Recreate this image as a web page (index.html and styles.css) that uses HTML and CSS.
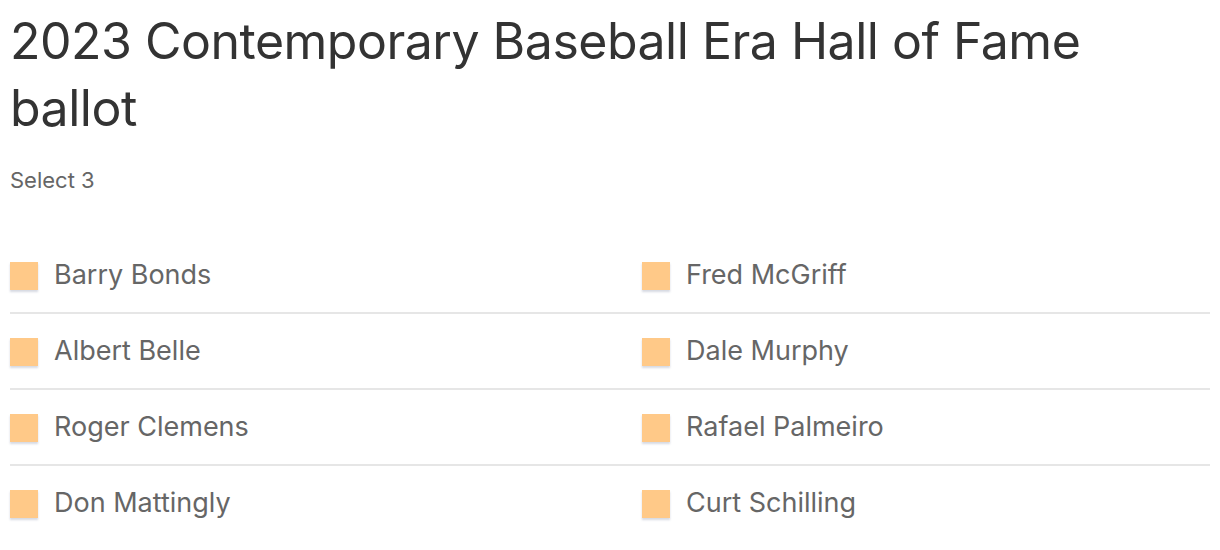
FILE: index.html
```html
<!DOCTYPE html>
<html>
<head>
<meta charset="utf-8">
<link rel="stylesheet" href="styles.css">
</head>
<body>
<div class="page">
  <h1 class="title">2023 Contemporary Baseball Era Hall of Fame ballot</h1>
  <div class="sub">Select 3</div>
  <div class="list">
    <div class="row">
      <div class="item"><span class="box"></span><span class="name">Barry Bonds</span></div>
      <div class="item"><span class="box"></span><span class="name">Fred McGriff</span></div>
    </div>
    <div class="row">
      <div class="item"><span class="box"></span><span class="name">Albert Belle</span></div>
      <div class="item"><span class="box"></span><span class="name">Dale Murphy</span></div>
    </div>
    <div class="row">
      <div class="item"><span class="box"></span><span class="name">Roger Clemens</span></div>
      <div class="item"><span class="box"></span><span class="name">Rafael Palmeiro</span></div>
    </div>
    <div class="row last">
      <div class="item"><span class="box"></span><span class="name">Don Mattingly</span></div>
      <div class="item"><span class="box"></span><span class="name">Curt Schilling</span></div>
    </div>
  </div>
</div>
</body>
</html>
```
FILE: styles.css
```css
html, body { margin: 0; padding: 0; background: #fff; }
.page {
  padding: 8px 10px 0 10px;
  font-family: Inter, "Noto Sans", sans-serif;
}
.title {
  margin: 0;
  font-size: 50px;
  line-height: 67px;
  font-weight: 400;
  color: #333;
  letter-spacing: -0.5px;
  width: 1100px;
}
.sub {
  margin-top: 25px;
  font-size: 22px;
  line-height: 26px;
  color: #666;
}
.list { margin-top: 45px; }
.row {
  display: grid;
  grid-template-columns: 632px 1fr;
  border-bottom: 2px solid #e6e6e6;
  padding: 24px 0 22px 0;
}
.row.last { border-bottom: none; }
.item {
  display: flex;
  align-items: center;
  height: 28px;
}
.box {
  width: 28px;
  height: 28px;
  background: #ffc988;
  box-shadow: 0 2px 2px rgba(120, 130, 160, 0.3);
  flex: none;
}
.name {
  margin-left: 16px;
  font-size: 27px;
  line-height: 32px;
  padding-bottom: 3px;
  color: #666;
}
```
